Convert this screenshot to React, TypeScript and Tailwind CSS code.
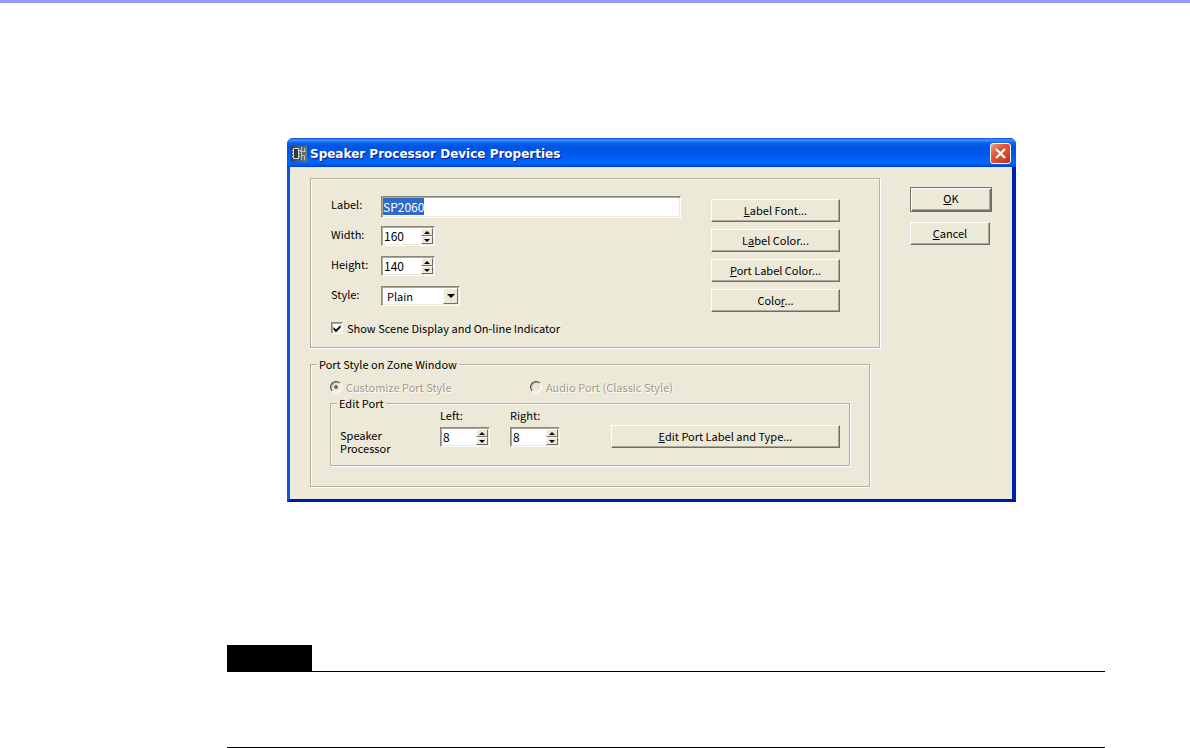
import { useEffect, useRef, useState, ReactNode } from 'react';

const font = "font-['Noto_Sans_CJK_JP',sans-serif]";
const sunken =
  'border border-[#8c8878] border-r-white border-b-white bg-white shadow-[inset_1px_1px_0_#aca899,inset_-1px_-1px_0_#ece9d8]';
const etched = 'border border-[#b4b1a3] shadow-[1px_1px_0_#fff,inset_1px_1px_0_#f8f7f0]';

interface PushButtonProps {
  children: ReactNode;
  className?: string;
  isDefault?: boolean;
}

function PushButton({ children, className = '', isDefault = false }: PushButtonProps) {
  return (
    <button
      type="button"
      className={`flex justify-center border bg-[#ece9d8] ${
        isDefault
          ? 'h-[25px] border-[#716f64] leading-5 shadow-[inset_1px_1px_0_#fff,inset_-1px_-1px_0_#716f64,inset_-2px_-2px_0_#aca899]'
          : 'h-[23px] border-white border-r-[#716f64] border-b-[#716f64] leading-5 shadow-[inset_-1px_-1px_0_#aca899]'
      } ${className}`}
    >
      <span>{children}</span>
    </button>
  );
}

function StepButton({ up = false, label }: { up?: boolean; label: string }) {
  return (
    <button
      type="button"
      aria-label={label}
      className="flex flex-1 items-center justify-center border border-white border-r-[#716f64] border-b-[#716f64] bg-[#ece9d8]"
    >
      <svg width="6" height="3" viewBox="0 0 6 3">
        <path d={up ? 'M3 0L6 3H0Z' : 'M0 0H6L3 3Z'} />
      </svg>
    </button>
  );
}

interface SpinnerProps {
  id: string;
  value: string;
  className: string;
}

function Spinner({ id, value, className }: SpinnerProps) {
  return (
    <div className={`flex h-5 p-px ${sunken} ${className}`}>
      <input
        id={id}
        type="text"
        inputMode="numeric"
        defaultValue={value}
        className="w-0 min-w-0 flex-1 pl-px text-[12px] leading-4 outline-none"
      />
      <div className="flex w-3 flex-col">
        <StepButton up label="Increase" />
        <StepButton label="Decrease" />
      </div>
    </div>
  );
}

function Field({ id, label, children }: { id: string; label: string; children: ReactNode }) {
  return (
    <div className="flex h-[22px] items-start">
      <label htmlFor={id} className="w-[50px] shrink-0 leading-4">
        {label}
      </label>
      {children}
    </div>
  );
}

function PortRadio({ label, checked = false, className = '' }: { label: string; checked?: boolean; className?: string }) {
  return (
    <label className={`flex items-center gap-1 whitespace-nowrap text-[#a09c8c] [text-shadow:1px_1px_0_#fff] ${className}`}>
      <input
        type="radio"
        name="port-style"
        disabled
        defaultChecked={checked}
        className="size-3 appearance-none rounded-full border border-[#4c4a42] border-r-white border-b-white bg-[#ece9d8] shadow-[inset_1px_1px_0_#aca899] checked:bg-[radial-gradient(circle,#716f64_2px,transparent_2px)]"
      />
      {label}
    </label>
  );
}

function TitleBar() {
  return (
    <header className="flex h-[29px] items-center rounded-t-md bg-[linear-gradient(#0a50d8_0px,#3c96ff_2px,#0a62ee_5px,#0053e1_9px,#0058ea_16px,#0066ff_24px,#0062f4_26px,#003dd0_29px)] pt-0.5 pr-[5px] pl-1">
      <svg width="16" height="16" viewBox="0 0 16 16" className="mr-[3px]" aria-hidden="true">
        <defs>
          <linearGradient id="device" x1="0" x2="1">
            <stop offset="0" stopColor="#36424c" />
            <stop offset="1" stopColor="#6c757c" />
          </linearGradient>
        </defs>
        <rect width="16" height="16" fill="url(#device)" />
        <path d="M2.5 2.5h5v10h-5z" fill="#303a42" stroke="#d4dade" />
        <path d="M1 4.500h1M1 7.500h1M1 10.500h1M8 4.500h2M8 7.500h1M8 10.500h1" stroke="#c4ccd0" />
        <path d="M10.500 1v13M13.500 2v3M9 5.500h6M10.500 9.500h3V14" fill="none" stroke="#b4bec4" />
      </svg>
      <h1 className="flex-1 font-['DejaVu_Sans',sans-serif] text-[12px] leading-4 font-bold whitespace-nowrap text-white [text-shadow:1px_1px_0_#0a1883]">
        Speaker Processor Device Properties
      </h1>
      <button
        type="button"
        aria-label="Close"
        className="flex size-[21px] items-center justify-center rounded-[3px] border border-white bg-[linear-gradient(135deg,#f0a088_0%,#e25a38_35%,#da4420_70%,#b83010_100%)]"
      >
        <svg width="13" height="13" viewBox="0 0 13 13">
          <path d="M2 2L11 11M11 2L2 11" stroke="#fff" strokeWidth="2.200" />
        </svg>
      </button>
    </header>
  );
}

function LabelSettings() {
  const labelRef = useRef<HTMLInputElement>(null);
  const [showScene, setShowScene] = useState(true);

  // the label is selected when the dialog opens
  useEffect(() => {
    labelRef.current?.focus();
    labelRef.current?.select();
  }, []);

  return (
    <section className={`flex gap-[30px] pt-[17px] pr-[39px] pb-[7px] pl-5 ${etched}`}>
      <div className="flex min-w-0 flex-1 flex-col gap-2">
        <Field id="label" label="Label:">
          <input
            id="label"
            ref={labelRef}
            type="text"
            defaultValue="SP2060"
            className={`h-[22px] w-0 min-w-0 flex-1 px-px pb-0.5 text-[12px] leading-[14px] outline-none selection:bg-[#316ac5] selection:text-white ${sunken}`}
          />
        </Field>
        <Field id="width" label="Width:">
          <Spinner id="width" value="160" className="w-[54px]" />
        </Field>
        <Field id="height" label="Height:">
          <Spinner id="height" value="140" className="w-[54px]" />
        </Field>
        <Field id="style" label="Style:">
          <div className={`relative h-5 w-[79px] p-px ${sunken}`}>
            <select id="style" className="block h-4 w-full appearance-none pl-1 leading-4 outline-none">
              <option>Plain</option>
            </select>
            <span className="pointer-events-none absolute inset-y-px right-px flex w-[15px] items-center justify-center border border-white border-r-[#716f64] border-b-[#716f64] bg-[#ece9d8]">
              <svg width="8" height="4" viewBox="0 0 8 4">
                <path d="M0 0H8L4 4Z" />
              </svg>
            </span>
          </div>
        </Field>
        <label className="flex h-6 items-center gap-1 whitespace-nowrap">
          <span className={`relative size-3 ${sunken}`}>
            <input
              type="checkbox"
              checked={showScene}
              onChange={(e) => setShowScene(e.target.checked)}
              className="absolute inset-0 appearance-none"
            />
            {showScene && (
              <svg viewBox="0 0 10 10" className="pointer-events-none absolute inset-0 size-full">
                <path d="M1.500 4L4 6.500L8.500 2V4.800L4 9.200L1.500 6.800Z" />
              </svg>
            )}
          </span>
          Show Scene Display and On-line Indicator
        </label>
      </div>
      <div className="flex w-[129px] flex-col gap-[7px] pt-[3px]">
        <PushButton>
          <u>L</u>abel Font...
        </PushButton>
        <PushButton>
          L<u>a</u>bel Color...
        </PushButton>
        <PushButton>
          <u>P</u>ort Label Color...
        </PushButton>
        <PushButton>
          Colo<u>r</u>...
        </PushButton>
      </div>
    </section>
  );
}

function PortSettings() {
  return (
    <fieldset className={`mt-[10px] mr-[10px] min-w-0 pb-5 ${etched}`}>
      <legend className="ml-1.5 bg-[#ece9d8] px-0.5 leading-3">Port Style on Zone Window</legend>
      <div className="px-[19px] pt-[9px]">
        <div className="mb-0.5 flex h-4">
          <PortRadio label="Customize Port Style" checked className="w-[200px]" />
          <PortRadio label="Audio Port (Classic Style)" />
        </div>
        <fieldset className={`min-w-0 pb-[10px] ${etched}`}>
          <legend className="ml-1.5 bg-[#ece9d8] px-0.5 leading-3">Edit Port</legend>
          <div className="flex items-start px-[9px]">
            <p className="w-[100px] pt-5 leading-[13px]">
              Speaker
              <br />
              Processor
            </p>
            <div className="mr-5 flex flex-col gap-1.5">
              <label htmlFor="left" className="leading-3">
                Left:
              </label>
              <Spinner id="left" value="8" className="w-[50px]" />
            </div>
            <div className="mr-[51px] flex flex-col gap-1.5">
              <label htmlFor="right" className="leading-3">
                Right:
              </label>
              <Spinner id="right" value="8" className="w-[50px]" />
            </div>
            <PushButton className="mt-4 flex-1">
              <u>E</u>dit Port Label and Type...
            </PushButton>
          </div>
        </fieldset>
      </div>
    </fieldset>
  );
}

export default function App() {
  return (
    <div className={`border-t-[3px] border-[#9999ff] bg-white text-[11px] text-black ${font}`}>
      <main className="pt-[135px] pr-[85px] pl-[227px]">
        <div role="dialog" aria-label="Speaker Processor Device Properties" className="mr-[89px] ml-[60px] rounded-t-md bg-[#001ea0]">
          <TitleBar />
          <div className="border-r-4 border-b-[3px] border-l-[3px] border-r-[#0022b0] border-b-[#0019a8] border-l-[#0855e8]">
            <div className="flex gap-[30px] bg-[#ece9d8] pt-[11px] pr-5 pb-3 pl-5">
              <div className="min-w-0 flex-1">
                <LabelSettings />
                <PortSettings />
              </div>
              <div className="flex w-[82px] flex-col gap-[10px] pt-[9px]">
                <PushButton isDefault>
                  <u>O</u>K
                </PushButton>
                <PushButton className="mr-0.5">
                  <u>C</u>ancel
                </PushButton>
              </div>
            </div>
          </div>
        </div>
        <div className="mt-[143px] border-b border-black">
          <div className="h-[26px] w-[85px] bg-black" />
        </div>
        <div className="h-[76px] border-b border-black" />
      </main>
    </div>
  );
}
